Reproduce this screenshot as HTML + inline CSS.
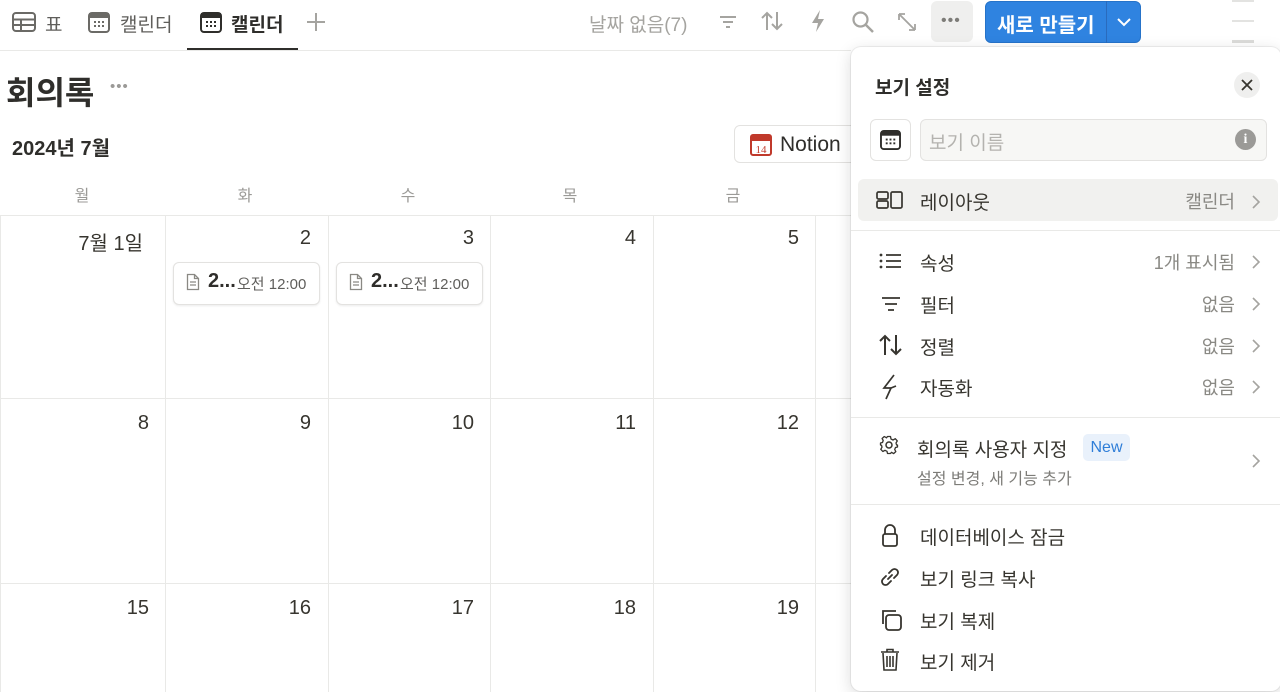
<!DOCTYPE html>
<html><head><meta charset="utf-8"><style>
*{box-sizing:border-box;margin:0;padding:0}
body{width:1280px;height:692px;overflow:hidden;background:#fff;font-family:"Liberation Sans","Noto Sans CJK KR",sans-serif;color:#37352f;position:relative}
.a{position:absolute;white-space:nowrap}
svg{position:absolute}
.vl{position:absolute;top:215px;bottom:0;width:1px;background:#e9e9e7}
.hl{position:absolute;left:0;width:851px;height:1px;background:#e9e9e7}
.dn{position:absolute;font-size:20px;color:#37352f;text-align:right}
.wd{position:absolute;top:182px;font-size:16px;color:#9b9a97;text-align:center;width:40px}
.card{position:absolute;top:262px;width:147px;height:43px;border:1px solid #e3e2e0;border-radius:6px;box-shadow:0 1px 2px rgba(0,0,0,.08);background:#fff}
.panel{position:absolute;left:851px;top:47px;width:430px;height:644px;background:#fff;border-radius:10px;box-shadow:0 0 0 1px rgba(15,15,15,.06),0 4px 16px rgba(15,15,15,.15)}
.row{position:absolute;left:0;width:430px;font-size:19px;color:#37352f}
.rv{position:absolute;right:46px;color:#8a8984;font-size:18px}
.sep{position:absolute;left:0;width:430px;height:1px;background:#e9e9e7}
.chev{position:absolute;right:20px}
</style></head><body>
<svg style="left:12px;top:12px" width="24" height="20" viewBox="0 0 24 20"><rect x="1" y="1" width="22" height="18" rx="3" fill="none" stroke="#6b6a66" stroke-width="2"/><path d="M1 7.5H23M1 13H23M9 7.5V19" stroke="#6b6a66" stroke-width="2"/></svg>
<div class="a" style="left:45px;top:10px;font-size:19px;color:#5f5e5b">표</div>
<svg style="left:88px;top:12px" width="22" height="21" viewBox="0 0 22 21"><rect x="1" y="1" width="20" height="19" rx="3" fill="none" stroke="#6b6a66" stroke-width="2"/><rect x="1" y="1" width="20" height="5" fill="#6b6a66"/><g fill="#6b6a66"><rect x="6" y="9" width="2" height="2"/><rect x="10" y="9" width="2" height="2"/><rect x="14" y="9" width="2" height="2"/><rect x="6" y="13" width="2" height="2"/><rect x="10" y="13" width="2" height="2"/><rect x="14" y="13" width="2" height="2"/></g></svg>
<div class="a" style="left:120px;top:10px;font-size:19px;color:#5f5e5b">캘린더</div>
<svg style="left:200px;top:12px" width="22" height="21" viewBox="0 0 22 21"><rect x="1" y="1" width="20" height="19" rx="3" fill="none" stroke="#2f2e2b" stroke-width="2"/><rect x="1" y="1" width="20" height="5" fill="#2f2e2b"/><g fill="#2f2e2b"><rect x="6" y="9" width="2" height="2"/><rect x="10" y="9" width="2" height="2"/><rect x="14" y="9" width="2" height="2"/><rect x="6" y="13" width="2" height="2"/><rect x="10" y="13" width="2" height="2"/><rect x="14" y="13" width="2" height="2"/></g></svg>
<div class="a" style="left:231px;top:10px;font-size:19px;color:#2f2e2b;font-weight:bold">캘린더</div>
<div class="a" style="left:187px;top:48px;width:111px;height:3px;background:#2f2e2b"></div>
<svg style="left:305px;top:11px" width="22" height="22"><path d="M11 2V20M2 11H20" stroke="#a5a4a0" stroke-width="2"/></svg>
<div class="a" style="left:0;top:50px;width:851px;height:1px;background:#e9e9e7"></div>
<div class="a" style="left:589px;top:10px;font-size:19px;color:#a5a4a0">날짜 없음(7)</div>
<svg style="left:717px;top:12px" width="22" height="20"><path d="M3 5H19M6 10H16M9 15H13" stroke="#a5a4a0" stroke-width="2"/></svg>
<svg style="left:760px;top:10px" width="24" height="22"><path d="M7 20V3M2 8L7 3L12 8M17 2V19M12 14L17 19L22 14" stroke="#a5a4a0" stroke-width="2" fill="none"/></svg>
<svg style="left:808px;top:9px" width="20" height="24"><path d="M12 1L4 14H10L8 23L16 10H10Z" fill="#a5a4a0"/></svg>
<svg style="left:851px;top:10px" width="24" height="24"><circle cx="9.5" cy="9.5" r="7" fill="none" stroke="#a5a4a0" stroke-width="2.2"/><path d="M15 15L22 22" stroke="#a5a4a0" stroke-width="2.5"/></svg>
<svg style="left:896px;top:11px" width="22" height="22"><path d="M3 3L19 19M3 3V9M3 3H9M19 19V13M19 19H13" stroke="#a5a4a0" stroke-width="1.8" fill="none"/></svg>
<div class="a" style="left:931px;top:1px;width:42px;height:41px;background:#efefee;border-radius:6px"></div>
<div class="a" style="left:941px;top:12px;font-size:16px;color:#7d7c78;letter-spacing:1px">•••</div>
<div class="a" style="left:985px;top:1px;width:156px;height:42px;background:#2f83e0;border-radius:6px;border:1px solid #2673c9"></div>
<div class="a" style="left:1106px;top:1px;width:1px;height:42px;background:#2a6bbd"></div>
<div class="a" style="left:997px;top:9px;font-size:20px;color:#fff;font-weight:bold">새로 만들기</div>
<svg style="left:1115px;top:15px" width="18" height="14"><path d="M3 4L9 10L15 4" stroke="#fff" stroke-width="2" fill="none"/></svg>
<div class="a" style="left:1232px;top:0;width:22px;height:2px;background:#e3e3e1"></div>
<div class="a" style="left:1232px;top:20px;width:22px;height:2px;background:#e3e3e1"></div>
<div class="a" style="left:1232px;top:40px;width:22px;height:3px;background:#dcdcda"></div>

<div class="a" style="left:6px;top:68px;font-size:32px;font-weight:bold;color:#2f2e2b">회의록</div>
<div class="a" style="left:110px;top:78px;font-size:15px;color:#9b9a97;letter-spacing:1px">•••</div>
<div class="a" style="left:12px;top:132px;font-size:20px;font-weight:bold;color:#2f2e2b">2024년 7월</div>
<div class="a" style="left:734px;top:125px;width:130px;height:38px;border:1px solid #e3e2e0;border-radius:6px"></div>
<svg style="left:750px;top:134px" width="22" height="22"><rect x="1" y="1" width="20" height="20" rx="2" fill="#fff" stroke="#c0392b" stroke-width="2"/><rect x="1" y="1" width="20" height="6" fill="#c0392b"/><text x="11" y="19" font-size="11" text-anchor="middle" fill="#c0392b" font-family="Liberation Serif">14</text></svg>
<div class="a" style="left:780px;top:133px;font-size:21px;color:#2f2e2b">Notion</div>

<div class="wd" style="left:62px">월</div><div class="wd" style="left:225px">화</div><div class="wd" style="left:388px">수</div><div class="wd" style="left:550px">목</div><div class="wd" style="left:713px">금</div>
<div class="hl" style="top:215px"></div><div class="hl" style="top:398px"></div><div class="hl" style="top:583px"></div>
<div class="vl" style="left:0"></div><div class="vl" style="left:165px"></div><div class="vl" style="left:328px"></div><div class="vl" style="left:490px"></div><div class="vl" style="left:653px"></div><div class="vl" style="left:815px"></div>
<div class="dn" style="left:0;width:143px;top:227px">7월 1일</div>
<div class="dn" style="left:165px;width:146px;top:227px">2</div>
<div class="dn" style="left:328px;width:146px;top:227px">3</div>
<div class="dn" style="left:490px;width:146px;top:227px">4</div>
<div class="dn" style="left:653px;width:146px;top:227px">5</div>
<div class="dn" style="left:0;width:149px;top:412px">8</div>
<div class="dn" style="left:165px;width:146px;top:412px">9</div>
<div class="dn" style="left:328px;width:146px;top:412px">10</div>
<div class="dn" style="left:490px;width:146px;top:412px">11</div>
<div class="dn" style="left:653px;width:146px;top:412px">12</div>
<div class="dn" style="left:0;width:149px;top:597px">15</div>
<div class="dn" style="left:165px;width:146px;top:597px">16</div>
<div class="dn" style="left:328px;width:146px;top:597px">17</div>
<div class="dn" style="left:490px;width:146px;top:597px">18</div>
<div class="dn" style="left:653px;width:146px;top:597px">19</div>
<div class="card" style="left:173px"></div><div class="card" style="left:336px"></div>
<svg style="left:186px;top:273px" width="14" height="18"><path d="M1.5 1.5H8.5L12.5 5.5V16.5H1.5Z M8.5 1.5V5.5H12.5 M4 9H10M4 12H10" stroke="#8a8984" stroke-width="1.3" fill="none"/></svg>
<svg style="left:349px;top:273px" width="14" height="18"><path d="M1.5 1.5H8.5L12.5 5.5V16.5H1.5Z M8.5 1.5V5.5H12.5 M4 9H10M4 12H10" stroke="#8a8984" stroke-width="1.3" fill="none"/></svg>
<div class="a" style="left:208px;top:270px;font-size:20px;font-weight:bold;color:#2f2e2b">2...</div>
<div class="a" style="left:237px;top:273px;font-size:15px;color:#5f5e5b">오전 12:00</div>
<div class="a" style="left:371px;top:270px;font-size:20px;font-weight:bold;color:#2f2e2b">2...</div>
<div class="a" style="left:400px;top:273px;font-size:15px;color:#5f5e5b">오전 12:00</div>

<div class="panel">
<div class="a" style="left:24px;top:26px;font-size:19px;font-weight:bold;color:#2f2e2b">보기 설정</div>
<div class="a" style="left:383px;top:25px;width:26px;height:26px;border-radius:50%;background:#efefee"></div>
<svg style="left:390px;top:32px" width="12" height="12"><path d="M1 1L11 11M11 1L1 11" stroke="#37352f" stroke-width="1.8"/></svg>
<div class="a" style="left:19px;top:72px;width:41px;height:42px;border:1px solid #e3e2e0;border-radius:6px"></div>
<svg style="left:29px;top:83px" width="21" height="20" viewBox="0 0 22 21"><rect x="1" y="1" width="20" height="19" rx="3" fill="none" stroke="#2f2e2b" stroke-width="2"/><rect x="1" y="1" width="20" height="5" fill="#2f2e2b"/><g fill="#2f2e2b"><rect x="6" y="9" width="2" height="2"/><rect x="10" y="9" width="2" height="2"/><rect x="14" y="9" width="2" height="2"/><rect x="6" y="13" width="2" height="2"/><rect x="10" y="13" width="2" height="2"/><rect x="14" y="13" width="2" height="2"/></g></svg>
<div class="a" style="left:69px;top:72px;width:347px;height:42px;border:1px solid #e3e2e0;border-radius:6px;background:#f7f7f5"></div>
<div class="a" style="left:78px;top:81px;font-size:19px;color:#b4b3af">보기 이름</div>
<div class="a" style="left:384px;top:82px;width:21px;height:21px;border-radius:50%;background:#9b9a97;color:#fff;font-size:14px;font-weight:bold;text-align:center;line-height:21px;font-family:'Liberation Serif',serif">i</div>
<div class="a" style="left:7px;top:132px;width:420px;height:42px;background:#f1f1ef;border-radius:6px"></div>
<svg style="left:25px;top:144px" width="28" height="18"><rect x="1" y="1" width="11" height="7" rx="1.5" fill="none" stroke="#37352f" stroke-width="1.7"/><rect x="1" y="10" width="11" height="7" rx="1.5" fill="none" stroke="#37352f" stroke-width="1.7"/><rect x="15" y="1" width="11" height="16" rx="1.5" fill="none" stroke="#37352f" stroke-width="1.7"/></svg>
<div class="row" style="top:141px"><span class="a" style="left:69px">레이아웃</span><span class="rv">캘린더</span></div>
<div class="sep" style="top:183px"></div>
<div class="row" style="top:202px"><span class="a" style="left:69px">속성</span><span class="rv">1개 표시됨</span></div>
<div class="row" style="top:244px"><span class="a" style="left:69px">필터</span><span class="rv">없음</span></div>
<div class="row" style="top:286px"><span class="a" style="left:69px">정렬</span><span class="rv">없음</span></div>
<div class="row" style="top:327px"><span class="a" style="left:69px">자동화</span><span class="rv">없음</span></div>
<svg style="left:28px;top:205px" width="24" height="18"><g fill="#37352f"><circle cx="2" cy="3" r="1.4"/><circle cx="2" cy="9" r="1.4"/><circle cx="2" cy="15" r="1.4"/></g><path d="M7 3H22M7 9H22M7 15H22" stroke="#37352f" stroke-width="1.8"/></svg>
<svg style="left:29px;top:248px" width="22" height="18"><path d="M2 3H20M5 9H17M8 15H14" stroke="#37352f" stroke-width="1.8"/></svg>
<svg style="left:27px;top:286px" width="26" height="24"><path d="M7 22V3M2 8L7 3L12 8M18 2V21M13 16L18 21L23 16" stroke="#37352f" stroke-width="2" fill="none"/></svg>
<svg style="left:30px;top:327px" width="18" height="26"><path d="M13 1L3 14H10L5 25" stroke="#37352f" stroke-width="1.7" fill="none"/><path d="M10 14L15 12" stroke="#37352f" stroke-width="1.7"/></svg>
<div class="sep" style="top:370px"></div>
<svg style="left:28px;top:388px" width="20" height="20" viewBox="0 0 20 20"><circle cx="10" cy="10" r="3" fill="none" stroke="#37352f" stroke-width="1.5"/><path d="M8.5 1.5H11.5L12 4L14 5L16.3 3.7L18.3 5.9L17 8L17.6 10L18.5 10V12L16.5 12.5L15.7 14.5L16.8 16.6L14.6 18.6L12.5 17.3L11.5 18.5H8.5L8 16.3L6 15.3L3.8 16.5L1.8 14.3L3 12.2L2.5 10.2L1.5 10V8L3.5 7.5L4.2 5.5L3.1 3.5L5.3 1.5L7.5 2.8Z" fill="none" stroke="#37352f" stroke-width="1.3" stroke-linejoin="round"/></svg>
<div class="a" style="left:66px;top:388px;font-size:19px;color:#37352f">회의록 사용자 지정</div>
<div class="a" style="left:232px;top:387px;width:47px;height:27px;border-radius:5px;background:#e9f1fb;color:#2f7ed8;font-size:16px;text-align:center;line-height:27px">New</div>
<div class="a" style="left:66px;top:418px;font-size:16px;color:#7d7c78">설정 변경, 새 기능 추가</div>
<div class="sep" style="top:457px"></div>
<div class="row" style="top:476px"><span class="a" style="left:69px">데이터베이스 잠금</span></div>
<div class="row" style="top:518px"><span class="a" style="left:69px">보기 링크 복사</span></div>
<div class="row" style="top:560px"><span class="a" style="left:69px">보기 복제</span></div>
<div class="row" style="top:601px"><span class="a" style="left:69px">보기 제거</span></div>
<svg style="left:30px;top:477px" width="18" height="24"><path d="M4 10V6A5 5 0 0 1 14 6V10" stroke="#37352f" stroke-width="1.8" fill="none"/><rect x="2" y="10" width="14" height="12" rx="2" fill="none" stroke="#37352f" stroke-width="1.8"/></svg>
<svg style="left:27px;top:518px" width="24" height="24"><path d="M10 14L14 10M8 11L5 14A3.5 3.5 0 0 0 10 19L13 16M16 13L19 10A3.5 3.5 0 0 0 14 5L11 8" stroke="#37352f" stroke-width="1.8" fill="none" stroke-linecap="round"/></svg>
<svg style="left:28px;top:561px" width="24" height="24"><path d="M4 16V3H17" stroke="#37352f" stroke-width="1.8" fill="none"/><rect x="7" y="7" width="15" height="15" rx="3" fill="none" stroke="#37352f" stroke-width="1.8"/></svg>
<svg style="left:29px;top:601px" width="20" height="24"><path d="M1 4H19M7 4V1.5H13V4M3 5L4 22H16L17 5M7 8V19M10 8V19M13 8V19" stroke="#37352f" stroke-width="1.6" fill="none"/></svg>
<svg class="chev" style="top:147px" width="10" height="16"><path d="M2 2L8 8L2 14" stroke="#a5a4a0" stroke-width="1.6" fill="none"/></svg>
<svg class="chev" style="top:207px" width="10" height="16"><path d="M2 2L8 8L2 14" stroke="#a5a4a0" stroke-width="1.6" fill="none"/></svg>
<svg class="chev" style="top:249px" width="10" height="16"><path d="M2 2L8 8L2 14" stroke="#a5a4a0" stroke-width="1.6" fill="none"/></svg>
<svg class="chev" style="top:291px" width="10" height="16"><path d="M2 2L8 8L2 14" stroke="#a5a4a0" stroke-width="1.6" fill="none"/></svg>
<svg class="chev" style="top:332px" width="10" height="16"><path d="M2 2L8 8L2 14" stroke="#a5a4a0" stroke-width="1.6" fill="none"/></svg>
<svg class="chev" style="top:406px" width="10" height="16"><path d="M2 2L8 8L2 14" stroke="#a5a4a0" stroke-width="1.6" fill="none"/></svg>
</div>
</body></html>
